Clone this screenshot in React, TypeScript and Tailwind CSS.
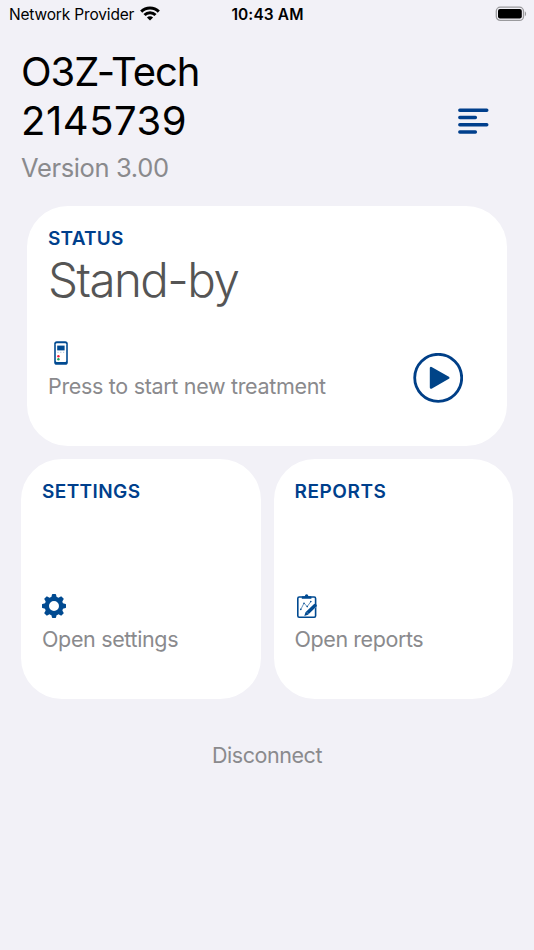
import React from "react";

function WifiIcon() {
  return (
    <svg className="mt-[-2px] ml-[5.5px] h-[15px] w-[20px]" viewBox="0 0 20 15" fill="none" stroke="#000" strokeWidth="3">
      <path d="M1.2 5.6a12.6 12.6 0 0 1 17.6 0" />
      <path d="M4.5 9a7.8 7.8 0 0 1 11 0" />
      <path d="M10 14.6 6.9 11.5a4.4 4.4 0 0 1 6.2 0Z" fill="#000" stroke="none" />
    </svg>
  );
}

function BatteryIcon() {
  return (
    <svg className="mt-[-1px] h-[16px] w-[32px]" viewBox="0 0 32 16">
      <rect x="1.3" y="1.2" width="27.2" height="13.2" rx="4" fill="none" stroke="#9a9a9d" strokeWidth="1.3" />
      <rect x="3" y="3" width="23.8" height="9.6" rx="2" fill="#000" />
      <path d="M29.9 5.4c1.6.6 1.6 4 0 4.6Z" fill="#9a9a9d" />
    </svg>
  );
}

function DeviceIcon() {
  return (
    <svg className="h-[24px] w-[14px]" viewBox="0 0 14 24">
      <rect x="0.2" y="0.2" width="13.6" height="23.6" rx="2.6" fill="#004a91" />
      <rect x="1.8" y="2.3" width="10.4" height="18.6" rx="1" fill="#fff" />
      <rect x="3.2" y="4.6" width="7.4" height="4.8" fill="#004a91" />
      <path d="M3.4 11.3h1.2M6.2 11.3h1.2M9 11.3h1.2" stroke="#9dbbd8" strokeWidth="0.9" />
      <circle cx="4.4" cy="15.2" r="1.25" fill="#f0203c" />
      <circle cx="4.4" cy="18.3" r="1.2" fill="#18a558" />
    </svg>
  );
}

function GearIcon() {
  const teeth = [0, 45, 90, 135, 180, 225, 270, 315];
  return (
    <svg className="h-[24px] w-[24px]" viewBox="-12 -12 24 24">
      <circle r="7.2" fill="none" stroke="#004a91" strokeWidth="4.4" />
      {teeth.map((a) => (
        <path key={a} d="M-2.9 -8 -2 -11.6Q-1.9 -12 -1.5 -12H1.5Q1.9 -12 2 -11.6L2.9 -8Z" fill="#004a91" transform={`rotate(${a})`} />
      ))}
    </svg>
  );
}

function ReportIcon() {
  return (
    <svg className="h-[24px] w-[20px]" viewBox="0 0 20 24" fill="none" stroke="#004a91">
      <rect x="0.8" y="3" width="17.8" height="20.2" rx="1.4" strokeWidth="1.6" />
      <path d="M4.8 4.8V2.7Q4.8 2.2 5.3 2.2H7.8Q8 .2 9.6 .2T11.4 2.2H13.9Q14.4 2.2 14.4 2.7V4.8Z" fill="#004a91" stroke="none" />
      <path d="M3.8 15.4 7 9.2 10.2 12.6 13.8 7.6" strokeWidth="0.6" />
      <g fill="#004a91" stroke="none">
        <circle cx="3.8" cy="15.4" r="0.8" />
        <circle cx="7" cy="9.2" r="0.8" />
        <circle cx="10.2" cy="12.6" r="0.8" />
        <circle cx="13.8" cy="7.6" r="0.8" />
      </g>
      <path d="M10.5 18.8 17.5 12" stroke="#fff" strokeWidth="4" />
      <path d="M7.3 22 8.5 18.3 16.8 10.2Q18.2 9.2 19.3 10.4T19.3 12.8L11 20.8Z" fill="#004a91" stroke="none" />
      <path d="m10 18.4 1.3 1.3" stroke="#fff" strokeWidth="0.5" />
    </svg>
  );
}

function MenuIcon() {
  return (
    <svg className="h-[26px] w-[31px]" viewBox="0 0 31 26" stroke="#003f8c" strokeWidth="3.4" strokeLinecap="round">
      <path d="M1.8 2.3h27M1.8 9.5h15.6M1.8 16.8h27M1.8 24h15.6" />
    </svg>
  );
}

function PlayIcon() {
  return (
    <svg className="h-[50px] w-[50px]" viewBox="0 0 50 50">
      <circle cx="25.2" cy="24.8" r="23.5" fill="none" stroke="#003f87" strokeWidth="2.8" />
      <path d="M18 15v19.6L35.3 24.8Z" fill="#004488" stroke="#004488" strokeWidth="2.4" strokeLinejoin="round" />
    </svg>
  );
}

function SmallCard({ title, icon, label, titleClass, labelClass }: { title: string; icon: React.ReactNode; label: string; titleClass: string; labelClass: string }) {
  return (
    <button className="flex h-[240px] w-[239.5px] flex-col items-start rounded-[41px] bg-white pt-[21px] pl-[21px] text-left">
      <span className={`h-[24px] text-[19px] leading-[24px] font-semibold whitespace-nowrap text-[#003f8c] ${titleClass}`}>{title}</span>
      <span className="mt-[90px] h-[24px]">{icon}</span>
      <span className={`mt-[7px] text-[21.5px] leading-[28px] whitespace-nowrap text-[#8a8a8d] ${labelClass}`}>{label}</span>
    </button>
  );
}

export default function App() {
  return (
    <main className="h-[950px] w-[534px] overflow-hidden bg-[#f2f1f7] font-['Inter','Liberation_Sans',sans-serif]">
      <header className="grid h-[28px] grid-cols-3 items-center pr-[7px] pl-[9px] text-[15.5px] leading-[28px] whitespace-nowrap text-black">
        <div className="flex items-center">
          <span className="pt-px leading-[27px] tracking-[-0.17px]">Network Provider</span>
          <WifiIcon />
        </div>
        <span className="pt-px pr-[1px] text-center leading-[27px] font-semibold tracking-[0.1px]">10:43 AM</span>
        <div className="flex justify-end"><BatteryIcon /></div>
      </header>

      <section className="flex h-[178px] items-start justify-between pt-[19px] pr-[45px] pl-[21px]">
        <div>
          <h1 className="text-[40px] leading-[49px] text-black">
            <span className="block tracking-[-1.05px]">O3Z-Tech</span>
            <span className="block tracking-[0.55px]">2145739</span>
          </h1>
          <p className="mt-[7px] text-[25.5px] leading-[32px] tracking-[-0.36px] text-[#8a8a8d]">Version 3.00</p>
        </div>
        <button className="mt-[61px]" aria-label="Menu"><MenuIcon /></button>
      </section>

      <section className="ml-[27px] flex h-[240px] w-[479.5px] justify-between rounded-[41px] bg-white pt-[21px] pr-[43.5px] pl-[21px]">
        <div className="flex flex-col items-start">
          <h2 className="text-[19px] leading-[24px] font-semibold tracking-[0.2px] text-[#003f8c]">STATUS</h2>
          <p className="text-[47.5px] leading-[58px] font-light tracking-[-1.55px] text-[#555]">Stand-by</p>
          <span className="mt-[32px] ml-[6px] h-[24px]"><DeviceIcon /></span>
          <p className="mt-[7px] text-[21.5px] leading-[28px] tracking-[-0.32px] text-[#8a8a8d]">Press to start new treatment</p>
        </div>
        <button className="mt-[126px] h-[50px]" aria-label="Start treatment"><PlayIcon /></button>
      </section>

      <section className="mt-[13px] flex gap-[13px] pl-[21px]">
        <SmallCard title="SETTINGS" icon={<GearIcon />} label="Open settings" titleClass="tracking-[0.4px]" labelClass="tracking-[-0.35px]" />
        <SmallCard title="REPORTS" icon={<span className="ml-[2.5px] block"><ReportIcon /></span>} label="Open reports" titleClass="tracking-[0.55px]" labelClass="tracking-[-0.42px]" />
      </section>

      <div className="mt-[42px] text-center">
        <button className="text-[21.5px] leading-[28px] tracking-[-0.45px] text-[#8a8a8d]">Disconnect</button>
      </div>
    </main>
  );
}
